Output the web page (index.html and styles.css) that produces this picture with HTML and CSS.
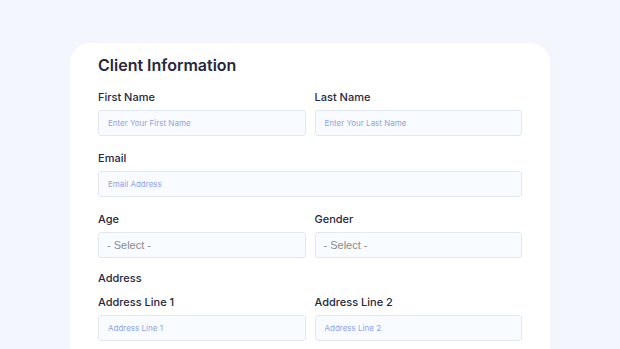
FILE: index.html
```html
<!DOCTYPE html>
<html lang="en">
<head>
  <meta charset="UTF-8">
  <title>Client Information</title>
  <meta name="viewport" content="width=device-width, initial-scale=1.0">
  <link rel="stylesheet" href="styles.css">
</head>
<body>
  <div class="card">
    <h2>Client Information</h2>

    <div class="row">
      <div class="field">
        <label for="first-name">First Name</label>
        <input type="text" id="first-name" placeholder="Enter Your First Name">
      </div>
      <div class="field">
        <label for="last-name">Last Name</label>
        <input type="text" id="last-name" placeholder="Enter Your Last Name">
      </div>
    </div>

    <div class="row">
      <div class="field">
        <label for="email">Email</label>
        <input type="email" id="email" placeholder="Email Address">
      </div>
    </div>

    <div class="row last">
      <div class="field">
        <label for="age">Age</label>
        <select id="age"><option>- Select -</option></select>
      </div>
      <div class="field">
        <label for="gender">Gender</label>
        <select id="gender"><option>- Select -</option></select>
      </div>
    </div>

    <h4 class="section">Address</h4>

    <div class="row">
      <div class="field">
        <label for="addr1">Address Line 1</label>
        <input type="text" id="addr1" placeholder="Address Line 1">
      </div>
      <div class="field">
        <label for="addr2">Address Line 2</label>
        <input type="text" id="addr2" placeholder="Address Line 2">
      </div>
    </div>
  </div>
</body>
</html>
```

FILE: styles.css
```css
body {
  font-family: 'Inter', 'Noto Sans', sans-serif;
  background: #f3f6fd;
  color: #27273d;
  margin: 0;
  padding: 43px 0 0 70px;
  overflow: hidden;
}
.card {
  width: 480px;
  height: 306px;
  box-sizing: border-box;
  background: #fff;
  border-radius: 20px 20px 0 0;
  padding: 12px 28px 0 28px;
  overflow: hidden;
}
h2 {
  font-size: 16px;
  font-weight: 600;
  line-height: 20px;
  margin: 0 0 15px 0;
}
.row {
  display: flex;
  gap: 9px;
  margin-bottom: 15px;
}
.row.last {
  margin-bottom: 13px;
}
.field {
  flex: 1;
  display: flex;
  flex-direction: column;
}
label, .section {
  font-size: 11px;
  font-weight: 500;
  line-height: 14px;
  margin-bottom: 6px;
}
.section {
  margin: 0 0 10px 0;
}
input, select {
  height: 26px;
  box-sizing: border-box;
  border: 1px solid #e1e8f2;
  border-radius: 3px;
  background: #f8fbff;
  padding: 0 9px;
  font-family: 'Inter', sans-serif;
  font-size: 8px;
  color: #444;
  outline: none;
}
input::placeholder {
  color: #8ea3e3;
}
select {
  -webkit-appearance: none;
  appearance: none;
  font-family: 'Liberation Sans', sans-serif;
  font-size: 11px;
  color: #8a8a8a;
  padding: 0 8px;
}
```
